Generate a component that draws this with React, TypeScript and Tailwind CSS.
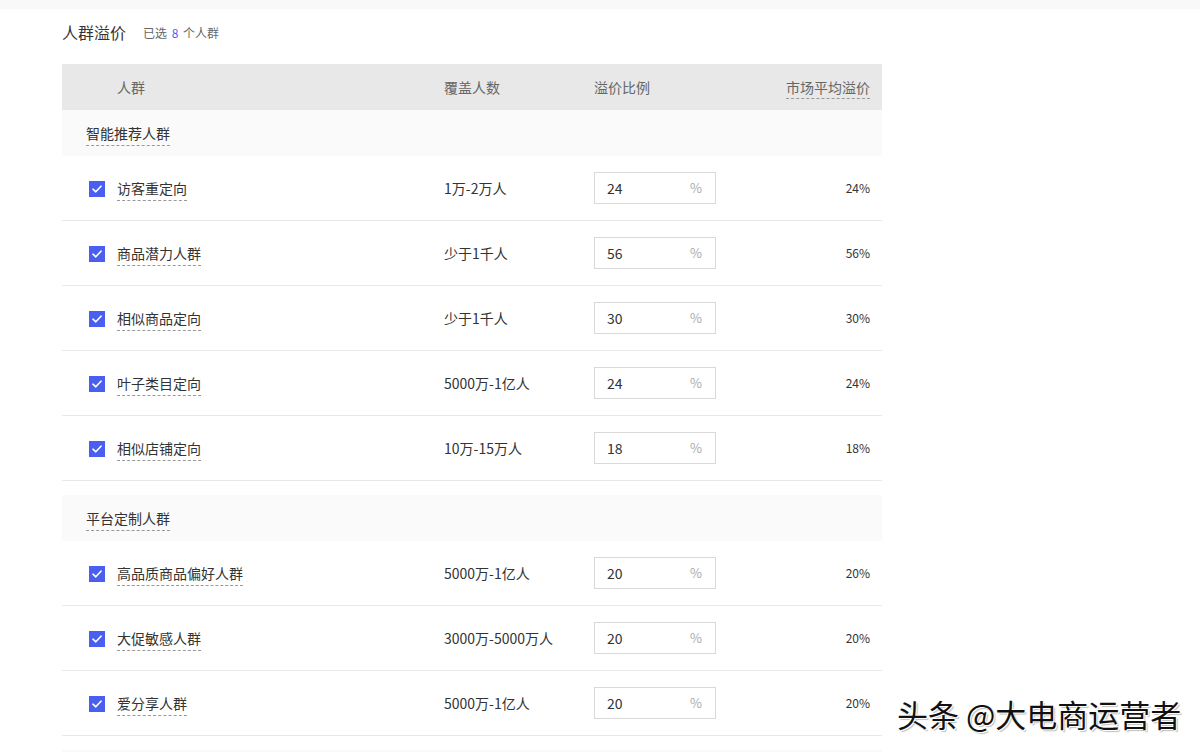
import React from "react";

type Row = { name: string; cover: string; val: string; avg: string };

const group1: Row[] = [
  { name: "访客重定向", cover: "1万-2万人", val: "24", avg: "24%" },
  { name: "商品潜力人群", cover: "少于1千人", val: "56", avg: "56%" },
  { name: "相似商品定向", cover: "少于1千人", val: "30", avg: "30%" },
  { name: "叶子类目定向", cover: "5000万-1亿人", val: "24", avg: "24%" },
  { name: "相似店铺定向", cover: "10万-15万人", val: "18", avg: "18%" },
];
const group2: Row[] = [
  { name: "高品质商品偏好人群", cover: "5000万-1亿人", val: "20", avg: "20%" },
  { name: "大促敏感人群", cover: "3000万-5000万人", val: "20", avg: "20%" },
  { name: "爱分享人群", cover: "5000万-1亿人", val: "20", avg: "20%" },
];

function Check() {
  return (
    <div className="w-4 h-4 bg-[#4a5ff0] flex items-center justify-center shrink-0 mt-[2px]">
      <svg width="10" height="8" viewBox="0 0 10 8" fill="none">
        <path d="M1 4.2 L3.8 6.8 L9 1.2" stroke="#fff" strokeWidth="1.6" strokeLinecap="round" strokeLinejoin="round" />
      </svg>
    </div>
  );
}

function DataRow({ r }: { r: Row }) {
  return (
    <div className="h-[65px] border-b border-[#e8e8e8] flex items-center text-[14px] text-[#333]">
      <div className="w-[27px]" />
      <Check />
      <div className="w-[12px]" />
      <div className="w-[327px]">
        <span className="border-b border-dashed border-[#999] pb-[2px] leading-[20px]">{r.name}</span>
      </div>
      <div className="w-[150px]">{r.cover}</div>
      <div className="w-[122px] h-[32px] border border-[#d9d9d9] flex items-center justify-between pl-[12px] pr-[13px]">
        <span>{r.val}</span>
        <span className="text-[#aaa] text-[13px]">%</span>
      </div>
      <div className="flex-1 text-right pr-[12px] text-[12px]">{r.avg}</div>
    </div>
  );
}

function GroupRow({ title }: { title: string }) {
  return (
    <div className="h-[46px] bg-[#fafafa] flex items-center pl-[24px] text-[14px] text-[#333]">
      <span className="border-b border-dashed border-[#999] pb-[2px] leading-[20px] mt-[2px]">{title}</span>
    </div>
  );
}

export default function App() {
  return (
    <div
      className="relative w-[1200px] h-[752px] overflow-hidden bg-white"
      style={{ fontFamily: '"Noto Sans CJK SC", "Noto Sans", sans-serif' }}
    >
      <div className="h-[9px] bg-[#f9f9f9]" />
      <div className="pl-[62px]">
        <div className="h-[55px] flex items-start pt-[12px]">
          <span className="text-[16px] text-[#333] leading-[22px]">人群溢价</span>
          <span className="ml-[17px] text-[12px] text-[#666] leading-[22px] mt-[1px]">
            已选 <span className="text-[#4a5ff0] mx-[2px]">8</span> 个人群
          </span>
        </div>
        <div className="w-[820px]">
          <div className="h-[46px] bg-[#e8e8e8] flex items-center text-[14px] text-[#666]">
            <div className="w-[55px]" />
            <div className="w-[327px]">人群</div>
            <div className="w-[150px]">覆盖人数</div>
            <div className="w-[122px]">溢价比例</div>
            <div className="flex-1 text-right pr-[12px]">
              <span className="border-b border-dashed border-[#999] pb-[1px]">市场平均溢价</span>
            </div>
          </div>
          <GroupRow title="智能推荐人群" />
          {group1.map((r) => (
            <DataRow key={r.name} r={r} />
          ))}
          <div className="h-[14px]" />
          <GroupRow title="平台定制人群" />
          {group2.map((r) => (
            <DataRow key={r.name} r={r} />
          ))}
          <div className="h-[14px]" />
          <div className="h-[46px] bg-[#fafafa]" />
        </div>
      </div>
      <div
        className="absolute left-[897px] top-[693px] text-[31px] text-[#111] leading-[42px] whitespace-nowrap"
        style={{ textShadow: "1px 1px 0 #fff, -1px -1px 0 #fff, 2px 2px 1px rgba(0,0,0,0.25)" }}
      >
        头条 @大电商运营者
      </div>
    </div>
  );
}
